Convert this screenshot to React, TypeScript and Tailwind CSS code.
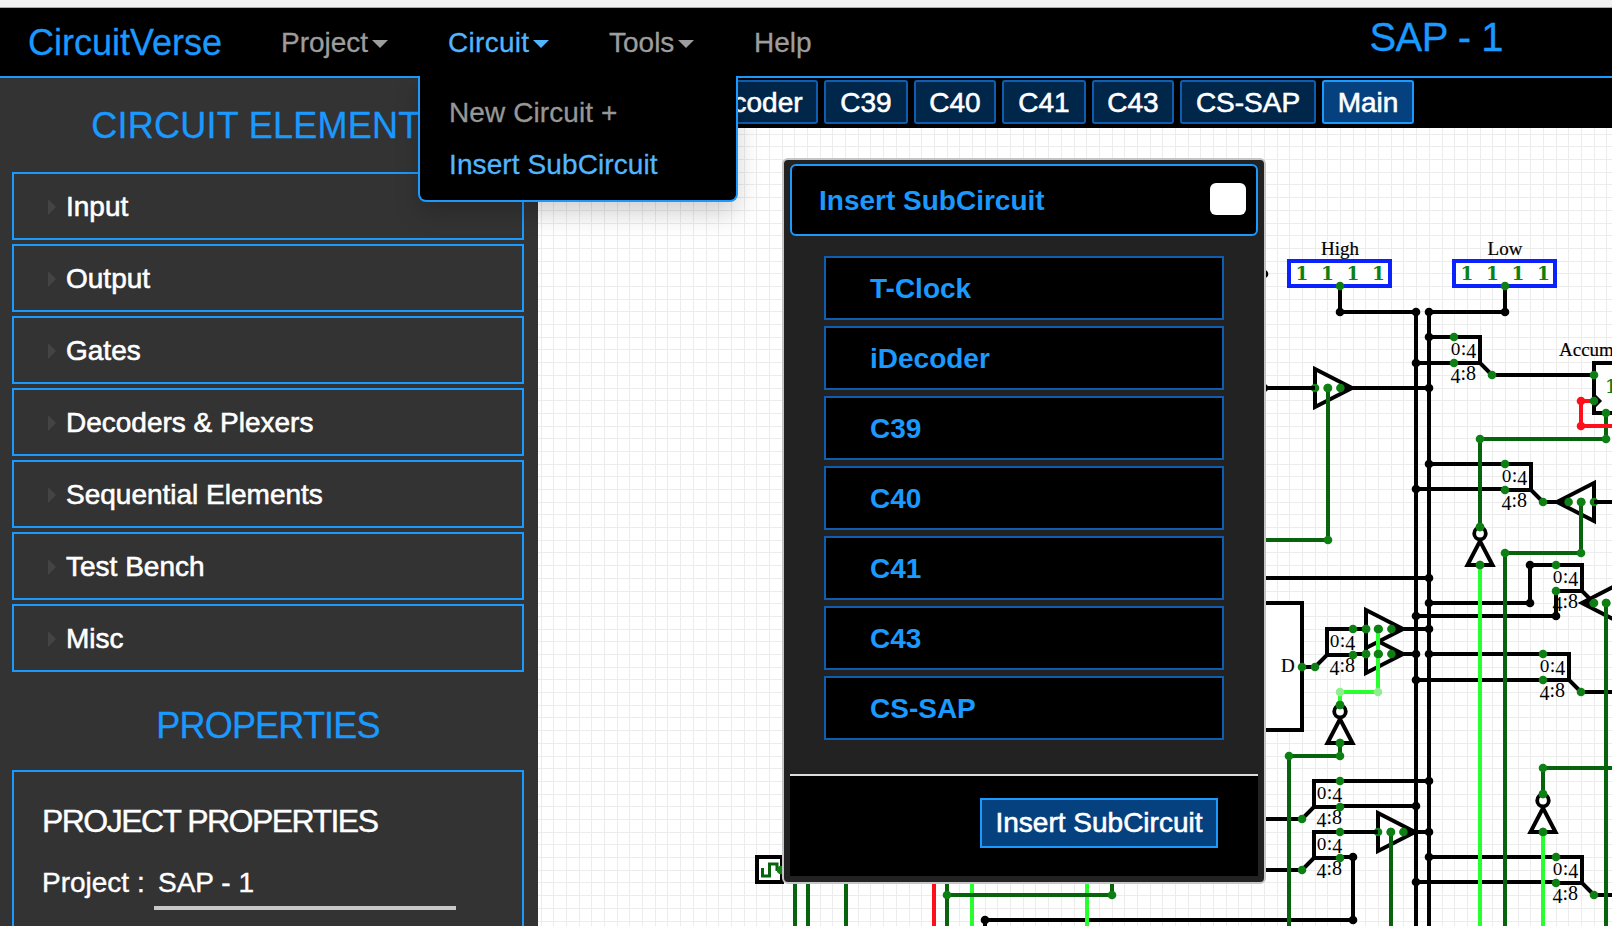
import React from "react";

type Pt = [number, number];

const SANS = "font-['Liberation_Sans',Arial,sans-serif]";
const BLACK = "#000000";
const DARK = "#07640c";
const LIVE = "#28ff2e";
const PIN = "#0d7f13";
const RED = "#ff0f1a";
const PALE = "#90ee90";

const elements = ["Input", "Output", "Gates", "Decoders & Plexers", "Sequential Elements", "Test Bench", "Misc"];

const tabs = [
  { name: "T-Clock", width: "w-[129px]" },
  { name: "iDecoder", width: "w-[143px]" },
  { name: "C39", width: "w-[84px]" },
  { name: "C40", width: "w-[82px]" },
  { name: "C41", width: "w-[84px]" },
  { name: "C43", width: "w-[82px]" },
  { name: "CS-SAP", width: "w-[136px]" },
  { name: "Main", width: "w-[92px]", active: true },
];

const subcircuits = ["T-Clock", "iDecoder", "C39", "C40", "C41", "C43", "CS-SAP"];

function Caret() {
  return <span className="mt-[2px] ml-[4px] h-0 w-0 border-x-8 border-t-8 border-x-transparent border-t-current" />;
}

function Wire({ pts, color = BLACK }: { pts: Pt[]; color?: string }) {
  return (
    <polyline
      points={pts.map((p) => p.join(",")).join(" ")}
      fill="none"
      stroke={color}
      strokeWidth={4}
      strokeLinejoin="miter"
    />
  );
}

function Dots({ pts, color = PIN }: { pts: Pt[]; color?: string }) {
  return (
    <>
      {pts.map(([x, y]) => (
        <circle key={`${x}-${y}`} cx={x} cy={y} r={4.3} fill={color} />
      ))}
    </>
  );
}

function Splitter({ x, y, flip }: { x: number; y: number; flip?: boolean }) {
  const d = flip ? -1 : 1;
  const corner = x + 26 * d;
  const end = x + 38 * d;
  const tx = flip ? x - 23.5 : x - 3.5;
  return (
    <>
      <Wire pts={[[x, y], [corner, y], [corner, y + 26], [end, y + 38]]} />
      <Wire pts={[[x, y + 26], [corner, y + 26]]} />
      <text x={tx} y={y + 18} fontSize={20} className="font-['Liberation_Serif',serif]">
        <tspan fontSize={16} className="font-['DejaVu_Serif',serif]">0</tspan>
        <tspan>:</tspan>
        <tspan dy={3}>4</tspan>
      </text>
      <text x={tx} y={y + 46} fontSize={20} className="font-['Liberation_Serif',serif]">
        <tspan>4</tspan>
        <tspan dy={-3}>:8</tspan>
      </text>
      <Dots pts={[[x, y], [x, y + 26], [end, y + 38]]} />
    </>
  );
}

function TriState({ x, y, flip }: { x: number; y: number; flip?: boolean }) {
  const d = flip ? -1 : 1;
  return (
    <>
      <polygon
        points={`${x},${y - 19} ${x},${y + 19} ${x + 37 * d},${y}`}
        fill="white"
        stroke={BLACK}
        strokeWidth={4}
      />
      <polygon points={`${x + 26 * d},${y - 6} ${x + 26 * d},${y + 6} ${x + 40 * d},${y}`} fill={BLACK} />
      <Dots pts={[[x, y], [x + 12.7 * d, y], [x + 25.4 * d, y]]} />
    </>
  );
}

function Inverter({ x, y }: { x: number; y: number }) {
  return (
    <>
      <polygon
        points={`${x - 12.5},${y + 38} ${x + 12.5},${y + 38} ${x},${y + 14}`}
        fill="white"
        stroke={BLACK}
        strokeWidth={4}
      />
      <circle cx={x} cy={y + 6.5} r={5.8} fill="white" stroke={BLACK} strokeWidth={3.8} />
      <Dots pts={[[x, y], [x, y + 38]]} />
    </>
  );
}

function InputBits({ x, label }: { x: number; label: string }) {
  return (
    <>
      <text x={x} y={255} textAnchor="middle" fontSize={19} stroke={BLACK} strokeWidth={0.2} className="font-['Liberation_Serif',serif]">
        {label}
      </text>
      <rect x={x - 51} y={261} width={101} height={25} fill="white" stroke="#0b22ff" strokeWidth={4} />
      {[-38, -12.6, 13, 38.4].map((o) => (
        <text
          key={o}
          x={x + o}
          y={280}
          textAnchor="middle"
          fontSize={18.5}
          fill={PIN}
          className="font-['DejaVu_Serif',serif] font-bold"
        >
          1
        </text>
      ))}
    </>
  );
}

function Schematic() {
  const pitch = 12.69;
  const cols = Array.from({ length: 85 }, (_, i) => Math.round(1340 + (i - 63) * pitch));
  const rows = Array.from({ length: 64 }, (_, i) => Math.round(286 + (i - 13) * pitch));
  return (
    <svg viewBox="538 128 1074 798" className="h-[798px] w-[1074px]">
      <rect x={538} y={128} width={1074} height={798} fill="white" />
      <g fill="#ececec" shapeRendering="crispEdges">
        {cols.map((x) => (
          <rect key={`c${x}`} x={x} y={128} width={1} height={798} />
        ))}
        {rows.map((y) => (
          <rect key={`r${y}`} x={538} y={y} width={1074} height={1} />
        ))}
      </g>

      <rect x={1180} y={603} width={122} height={127} fill="white" stroke={BLACK} strokeWidth={4} />
      <rect x={1594} y={363} width={60} height={50} fill="white" stroke={BLACK} strokeWidth={4} />
      <polyline points="1594,394 1601,401 1594,408" fill={BLACK} stroke={BLACK} strokeWidth={1.5} />
      <text x={1559} y={356} fontSize={19} stroke={BLACK} strokeWidth={0.2} className="font-['Liberation_Serif',serif]">Accum</text>
      <text x={1605} y={393} fontSize={18.5} fill={PIN} className="font-['DejaVu_Serif',serif] font-bold">1</text>
      <text x={1281} y={672} fontSize={19} stroke={BLACK} strokeWidth={0.2} className="font-['Liberation_Serif',serif]">D</text>

      <InputBits x={1340} label="High" />
      <InputBits x={1505} label="Low" />

      <TriState x={1366} y={654} />
      <TriState x={1366} y={629} />
      <TriState x={1315} y={388} />
      <TriState x={1594} y={502} flip />
      <TriState x={1619} y={603} flip />
      <TriState x={1378} y={832} />
      <Inverter x={1480} y={527} />
      <Inverter x={1340} y={705} />
      <Inverter x={1543} y={794} />

      <Wire pts={[[1340, 286], [1340, 312], [1416, 312], [1416, 926]]} />
      <Wire pts={[[1505, 286], [1505, 312], [1429, 312], [1429, 926]]} />
      <Wire pts={[[1240, 388], [1315, 388]]} />
      <Wire pts={[[1350, 388], [1429, 388]]} />
      <Wire pts={[[1429, 337], [1454, 337]]} />
      <Wire pts={[[1416, 363], [1454, 363]]} />
      <Wire pts={[[1492, 375], [1594, 375]]} />
      <Wire pts={[[1429, 464], [1505, 464]]} />
      <Wire pts={[[1416, 489], [1505, 489]]} />
      <Wire pts={[[1543, 502], [1558, 502]]} />
      <Wire pts={[[1594, 502], [1612, 502]]} />
      <Wire pts={[[1240, 578], [1429, 578]]} />
      <Wire pts={[[1429, 603], [1530, 603], [1530, 565], [1556, 565]]} />
      <Wire pts={[[1416, 616], [1556, 616], [1556, 591]]} />
      <Wire pts={[[1353, 629], [1366, 629]]} />
      <Wire pts={[[1353, 654], [1366, 654]]} />
      <Wire pts={[[1400, 629], [1429, 629]]} />
      <Wire pts={[[1400, 654], [1416, 654]]} />
      <Wire pts={[[1429, 654], [1543, 654]]} />
      <Wire pts={[[1416, 680], [1543, 680]]} />
      <Wire pts={[[1581, 692], [1612, 692]]} />
      <Wire pts={[[1302, 667], [1315, 667]]} />
      <Wire pts={[[1340, 781], [1429, 781]]} />
      <Wire pts={[[1340, 806], [1416, 806]]} />
      <Wire pts={[[1240, 819], [1302, 819]]} />
      <Wire pts={[[1240, 870], [1302, 870]]} />
      <Wire pts={[[1340, 832], [1378, 832]]} />
      <Wire pts={[[1412, 832], [1429, 832]]} />
      <Wire pts={[[1340, 857], [1353, 857], [1353, 920], [985, 920], [985, 926]]} />
      <Wire pts={[[1429, 857], [1556, 857]]} />
      <Wire pts={[[1416, 882], [1556, 882]]} />
      <Wire pts={[[1594, 895], [1612, 895]]} />

      <Wire color={DARK} pts={[[1328, 388], [1328, 540], [1240, 540]]} />
      <Wire color={DARK} pts={[[1606, 413], [1606, 439], [1480, 439], [1480, 527]]} />
      <Wire color={DARK} pts={[[1581, 502], [1581, 553], [1505, 553], [1505, 926]]} />
      <Wire color={DARK} pts={[[1606, 603], [1606, 926]]} />
      <Wire color={DARK} pts={[[1340, 743], [1340, 756], [1289, 756], [1289, 926]]} />
      <Wire color={DARK} pts={[[1543, 794], [1543, 768], [1612, 768]]} />
      <Wire color={DARK} pts={[[1391, 832], [1391, 926]]} />
      <Wire color={LIVE} pts={[[1480, 565], [1480, 926]]} />
      <Wire color={LIVE} pts={[[1378, 629], [1378, 692], [1340, 692], [1340, 705]]} />
      <Wire color={LIVE} pts={[[1543, 832], [1543, 926]]} />
      <Wire color={RED} pts={[[1594, 401], [1581, 401], [1581, 426], [1612, 426]]} />

      <Wire color={DARK} pts={[[795, 870], [795, 926]]} />
      <Wire color={DARK} pts={[[808, 870], [808, 926]]} />
      <Wire color={DARK} pts={[[846, 870], [846, 926]]} />
      <Wire color={RED} pts={[[934, 870], [934, 926]]} />
      <Wire color={LIVE} pts={[[972, 870], [972, 926]]} />
      <Wire color={LIVE} pts={[[1087, 870], [1087, 926]]} />
      <Wire color={DARK} pts={[[947, 870], [947, 926]]} />
      <Wire color={DARK} pts={[[947, 895], [1112, 895], [1112, 870]]} />

      <Splitter x={1454} y={337} />
      <Splitter x={1505} y={464} />
      <Splitter x={1556} y={565} />
      <Splitter x={1543} y={654} />
      <Splitter x={1556} y={857} />
      <Splitter x={1353} y={629} flip />
      <Splitter x={1340} y={781} flip />
      <Splitter x={1340} y={832} flip />

      <Dots
        color={BLACK}
        pts={[
          [1264, 274], [1264, 388], [1340, 312], [1416, 312], [1429, 312], [1505, 312],
          [1429, 337], [1429, 388], [1429, 464], [1429, 578], [1429, 603], [1429, 629],
          [1429, 654], [1429, 781], [1429, 832], [1429, 857], [1416, 363], [1416, 489],
          [1416, 616], [1416, 654], [1416, 680], [1416, 806], [1416, 882], [1530, 565],
          [1530, 603], [1556, 616], [1353, 857], [1353, 920], [985, 920],
        ]}
      />
      <Dots
        pts={[
          [1340, 286], [1505, 286], [1328, 388], [1328, 540], [1594, 375], [1594, 401],
          [1606, 413], [1606, 439], [1480, 439], [1480, 527], [1480, 565], [1581, 502],
          [1581, 553], [1505, 553], [1606, 603], [1302, 667], [1366, 629], [1378, 629],
          [1366, 654], [1378, 654], [1340, 705], [1340, 743], [1340, 756], [1289, 756],
          [1543, 768], [1543, 794], [1543, 832], [1391, 832], [947, 895], [1112, 895],
        ]}
      />
      <Dots color={RED} pts={[[1581, 401], [1581, 426]]} />
      <Dots color={PALE} pts={[[1340, 692], [1378, 692]]} />

      <rect x={757} y={857} width={25} height={25} fill="white" stroke={BLACK} strokeWidth={4} />
      <polyline points="762.5,868 762.5,876 769.5,876 769.5,864 777,864 777,871" fill="none" stroke={DARK} strokeWidth={3} />
      <Dots pts={[[781, 870]]} />
    </svg>
  );
}

function Navbar() {
  return (
    <nav className="flex h-[70px] shrink-0 items-center border-b-2 border-[#1a99ff] bg-black pt-[2px] pl-[28px] text-[28px] text-[#9d9d9d] [-webkit-text-stroke:0.3px_currentColor]">
      <div className="w-[253px] text-[36px] text-[#1a99ff]">CircuitVerse</div>
      <div className="flex w-[167px] items-center">Project<Caret /></div>
      <div className="flex w-[161px] items-center text-[#52b6ff]"><span className="tracking-[0.3px]">Circuit</span><Caret /></div>
      <div className="flex w-[145px] items-center">Tools<Caret /></div>
      <div>Help</div>
      <div className="mr-[109px] mb-[13px] ml-auto text-[40px] tracking-[-0.5px] text-[#1a99ff]">SAP - 1</div>
    </nav>
  );
}

function Sidebar() {
  return (
    <aside className="flex w-[538px] shrink-0 flex-col bg-[#333333] pr-[14px] pl-[12px] text-[28px] text-white">
      <h2 className="flex h-[94px] shrink-0 items-center justify-center pt-[2px] text-[36px] tracking-[0.25px] text-[#1a99ff] [-webkit-text-stroke:0.3px_#1a99ff]">
        CIRCUIT ELEMENTS
      </h2>
      <div className="flex flex-col gap-1">
        {elements.map((name) => (
          <div key={name} className="flex h-[68px] items-center border-2 border-[#1a99ff] pt-[2px] pl-[34px] [-webkit-text-stroke:0.6px_white]">
            <span className="mr-[10px] h-0 w-0 border-y-8 border-l-8 border-y-transparent border-l-[#444444]" />
            {name}
          </div>
        ))}
      </div>
      <h2 className="flex h-[98px] shrink-0 items-center justify-center pt-[9px] text-[36px] tracking-[-0.8px] text-[#1a99ff] [-webkit-text-stroke:0.3px_#1a99ff]">
        PROPERTIES
      </h2>
      <section className="h-[200px] shrink-0 border-2 border-[#1a99ff] pt-[27px] pl-[28px]">
        <div className="h-[44px] text-[32px] leading-[44px] tracking-[-1.55px] [-webkit-text-stroke:0.4px_white]">
          PROJECT PROPERTIES
        </div>
        <div className="mt-[15px] flex h-[52px] [-webkit-text-stroke:0.4px_white]">
          <span className="w-[112px] leading-[49px]">Project :</span>
          <span className="w-[302px] border-b-4 border-[#c8c8c8] pl-[4px] leading-[49px]">SAP - 1</span>
        </div>
      </section>
    </aside>
  );
}

function CircuitMenu() {
  return (
    <div className="absolute top-[76px] left-[418px] h-[126px] w-[320px] rounded-b-[8px] border-2 border-t-0 border-[#1a99ff] bg-black pt-[11px] pl-[29px] text-[28px] leading-[52px] tracking-[0.1px] shadow-[0_12px_24px_rgba(0,0,0,0.18)] [-webkit-text-stroke:0.3px_currentColor]">
      <div className="text-[#979797]">New Circuit +</div>
      <div className="text-[#52b6ff]">Insert SubCircuit</div>
    </div>
  );
}

function SubcircuitDialog() {
  return (
    <div className="absolute top-[158px] left-[782px] flex h-[726px] w-[484px] flex-col rounded-[6px] border-2 border-[#c5c5c5] bg-[#222222] px-[6px] pt-[4px] pb-[6px] text-[28px]">
      <header className="flex h-[72px] shrink-0 items-center justify-between rounded-[6px] border-2 border-[#1a99ff] bg-black pr-[10px] pl-[27px] font-bold text-[#1a99ff]">
        <span className="pt-[1px]">Insert SubCircuit</span>
        <button className="mb-[2px] h-[32px] w-[36px] rounded-[6px] bg-white" />
      </header>
      <div className="flex grow flex-col gap-[6px] px-[34px] pt-[20px]">
        {subcircuits.map((name) => (
          <div key={name} className="flex h-[64px] items-center border-2 border-[#0f5db0] bg-black pt-px pl-[44px] font-bold text-[#1a99ff]">
            {name}
          </div>
        ))}
      </div>
      <footer className="flex h-[102px] shrink-0 items-start justify-end border-t-2 border-[#dddddd] bg-black pt-[22px] pr-[40px]">
        <button className="flex h-[50px] w-[238px] items-center justify-center border-2 border-[#1a99ff] bg-[#06417f] whitespace-nowrap text-white [-webkit-text-stroke:0.6px_white]">
          Insert SubCircuit
        </button>
      </footer>
    </div>
  );
}

export default function App() {
  return (
    <div className={`relative flex h-[926px] w-[1612px] flex-col overflow-hidden bg-white ${SANS}`}>
      <div className="h-[8px] shrink-0 border-b border-[#aaaaaa] bg-[#f1f1f1]" />
      <Navbar />
      <div className="flex h-[848px]">
        <Sidebar />
        <main className="flex w-[1074px] flex-col">
          <div className="flex h-[50px] shrink-0 gap-[6px] bg-black pt-[2px] pl-[2px]">
            {tabs.map((t) => (
              <button
                key={t.name}
                className={`flex h-[44px] shrink-0 items-center justify-center rounded-[3px] border-2 pt-[2px] text-[28px] text-white [-webkit-text-stroke:0.6px_white] ${t.width} ${
                  t.active ? "border-[#1a99ff] bg-[#06417f]" : "border-[#0f5db0] bg-[#00264a]"
                }`}
              >
                {t.name}
              </button>
            ))}
          </div>
          <Schematic />
        </main>
      </div>
      <CircuitMenu />
      <SubcircuitDialog />
    </div>
  );
}
